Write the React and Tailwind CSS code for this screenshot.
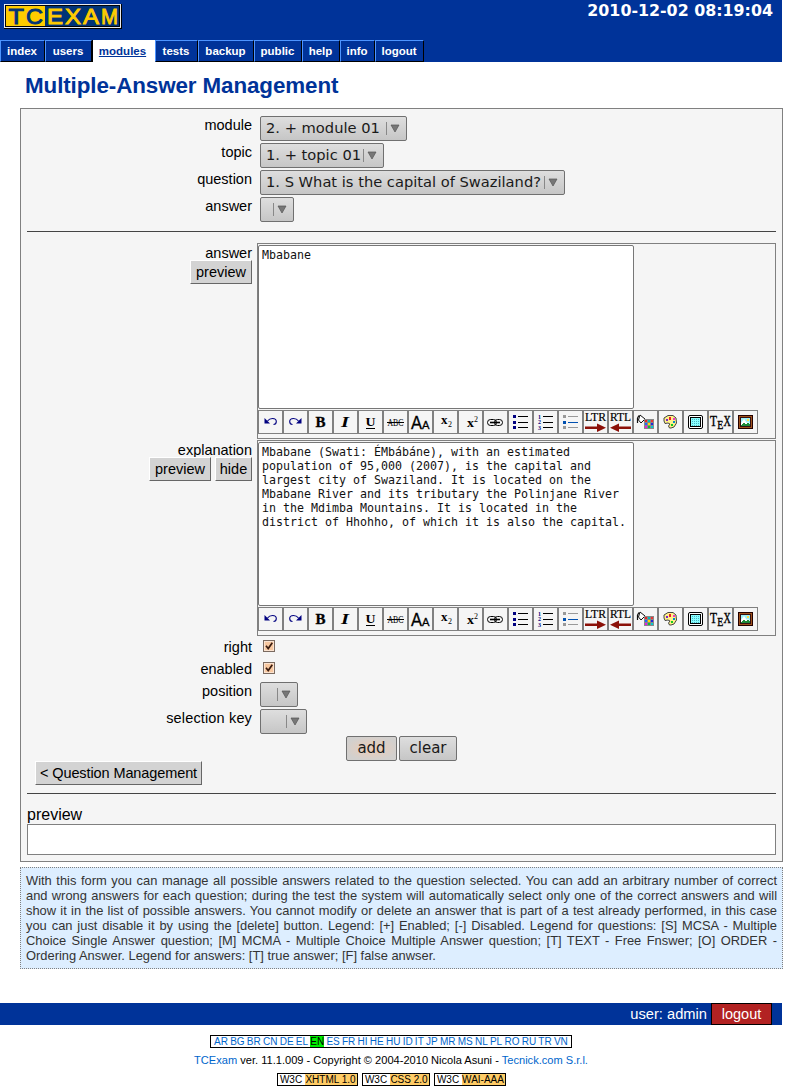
import React from "react";

const ARIAL = "font-['Liberation_Sans',Arial,sans-serif]";
const DEJAVU = "font-['DejaVu_Sans',sans-serif]";

const tabs = [
  ["index", "w-[45px]"],
  ["users", "w-[47px]"],
  ["modules", "w-[63px]"],
  ["tests", "w-[43px]"],
  ["backup", "w-[56px]"],
  ["public", "w-[48px]"],
  ["help", "w-[38px]"],
  ["info", "w-[35px]"],
  ["logout", "w-[49px]"],
];

const logoLetters = [
  ["T", 4.5, 15.5],
  ["C", 22, 17],
  ["E", 43, 16],
  ["X", 61, 16],
  ["A", 79, 16],
  ["M", 97, 17],
];

function Logo() {
  return (
    <svg width="118" height="25" viewBox="0 0 118 25" className="block" fontFamily="'Liberation Sans', sans-serif" fontSize="21.5" fontWeight="400" strokeWidth="0.9">
      <rect width="118" height="25" fill="#000" />
      <rect x="0.5" y="0.5" width="116" height="23" fill="#003377" stroke="#fff" />
      <rect x="1.5" y="1.5" width="114" height="21" fill="none" stroke="#000" />
      <rect x="2" y="2" width="39" height="20" fill="#ffcc00" />
      {logoLetters.map(([letter, x, w], i) => (
        <text key={letter} x={x} y="19.7" fill={i < 2 ? "#003377" : "#ffcc00"} stroke={i < 2 ? "#003377" : "#ffcc00"} textLength={w} lengthAdjust="spacingAndGlyphs">{letter}</text>
      ))}
    </svg>
  );
}

function Arrow() {
  return (
    <svg width="20" height="13" viewBox="0 0 20 13" className="block shrink-0" shapeRendering="crispEdges">
      <path d="M.5 0V13" stroke="#888" />
      <path d="M5 3H13L9 10Z" fill="#777" stroke="#555" strokeWidth=".7" shapeRendering="auto" />
    </svg>
  );
}

function Select({ text = "", width }) {
  return (
    <div className={`mt-px flex h-[25px] items-center justify-between rounded-[2px] border border-[#707070] bg-linear-to-b from-[#dedede] to-[#c6c6c6] pl-[5px] ${DEJAVU} text-[14.67px] text-[#1a1a1a] ${width}`}>
      <span className="pb-[2px] leading-[20px] whitespace-pre">{text}</span>
      <Arrow />
    </div>
  );
}

function Field({ label, children, height = "h-[27px]" }) {
  return (
    <div className={`flex ${height}`}>
      <div className="mr-2 w-[231px] text-right leading-[20px]">{label}</div>
      {children}
    </div>
  );
}

function LinkButton({ children, className = "" }) {
  return (
    <span className={`inline-block h-[24px] border border-t-white border-l-white border-r-[#666] border-b-[#666] bg-[#d3d3d3] text-center leading-[22px] whitespace-nowrap ${className}`}>
      {children}
    </span>
  );
}

const T = ({ x, y, size, w, children, ...rest }) => (
  <text x={x} y={y} fontSize={size} textLength={w} lengthAdjust="spacingAndGlyphs" fontFamily="'Liberation Serif', serif" {...rest}>{children}</text>
);

const listLines = (color) => (
  <path d="M9 5.5H19M9 11.5H19M9 16.5H19" stroke={color} />
);

const icons = [
  <g key="undo"><path d="M8.5 10C10 8 11.5 7.5 13.5 7.5C16 7.5 17.3 9 17.3 10.5C17.3 12.2 16 13.5 14.5 13.5" fill="none" stroke="#000080" strokeWidth="1.1" /><path d="M5.5 7V12.5H11Z" fill="#000080" /></g>,
  <g key="redo"><path d="M14.5 10C13 8 11.5 7.5 9.5 7.5C7 7.5 5.7 9 5.7 10.5C5.7 12.2 7 13.5 8.5 13.5" fill="none" stroke="#000080" strokeWidth="1.1" /><path d="M17.5 7V12.5H12Z" fill="#000080" /></g>,
  <T key="b" x="6.5" y="15.5" size="14" w="10" fontWeight="700" stroke="#000" strokeWidth=".3">B</T>,
  <T key="i" x="7" y="15.5" size="14" w="8" fontWeight="700" fontStyle="italic">I</T>,
  <g key="u"><T x="6.5" y="15" size="13.5" w="10" fontWeight="700">U</T><path d="M7 17.5H16" stroke="#000" /></g>,
  <g key="abc"><T x="3.5" y="15" size="10" w="16">ABC</T><path d="M3 11.5H20" stroke="#000" /></g>,
  <g key="size"><T x="2" y="18" size="19" w="11" fontFamily="'Liberation Sans'" stroke="#000" strokeWidth=".3">A</T><T x="13" y="18" size="11.5" w="7.5" fontFamily="'Liberation Sans'" stroke="#000" strokeWidth=".3">A</T></g>,
  <g key="sub"><T x="7" y="13" size="12" w="6.5" fontWeight="700">x</T><T x="14" y="16" size="9" w="4">2</T></g>,
  <g key="sup"><T x="8" y="16" size="13" w="7" fontWeight="700">x</T><T x="15" y="11" size="9" w="4">2</T></g>,
  <g key="link" fill="none" stroke="#000"><rect x="3.5" y="8.5" width="9" height="6" rx="3" /><rect x="10.5" y="8.5" width="8" height="6" rx="3" /><path d="M6 11.5H16" strokeWidth="1.6" /></g>,
  <g key="ul" shapeRendering="crispEdges">{listLines("#000")}<path d="M4 4h3v3H4zM4 10h3v3H4zM4 15h3v3H4z" fill="#000080" /></g>,
  <g key="ol" shapeRendering="crispEdges">{listLines("#000")}<g shapeRendering="auto" fill="#000080" fontWeight="700"><T x="4" y="7.5" size="6">1</T><T x="4" y="13.3" size="6">2</T><T x="4" y="19.1" size="6">3</T></g></g>,
  <g key="li" shapeRendering="crispEdges">{listLines("#999")}<path d="M4 4h3v3H4zM4 15h3v3H4z" fill="#999" /><path d="M4 10h3v3H4z" fill="#0050b0" /><path d="M9 11.5H19" stroke="#0050b0" /></g>,
  <g key="ltr"><T x="1" y="10" size="12.5" w="21" stroke="#000" strokeWidth=".2">LTR</T><path d="M1 15.5H13V12.5L22 16.8L13 21V18H1Z" fill="#8b1008" /></g>,
  <g key="rtl"><T x="1" y="10" size="12.5" w="21" stroke="#000" strokeWidth=".2">RTL</T><path d="M22 15.5H10V12.5L1 16.8L10 21V18H22Z" fill="#8b1008" /></g>,
  <g key="fill">
    <path d="M6 4L11 8L7 12L4.5 9Z" fill="#fff" stroke="#111" /><path d="M3.5 7L5 4.5M3.5 7V12" fill="none" stroke="#111" strokeWidth="1.2" />
    <rect x="10" y="8" width="10" height="10" fill="#888" />
    <path d="M11 9h2v2h-2z" fill="#e22" /><path d="M14 9h2v2h-2z" fill="#0bb" /><path d="M17 9h2v2h-2z" fill="#e33" /><path d="M11 12h2v2h-2z" fill="#26f" /><path d="M14 12h2v2h-2z" fill="#fd0" /><path d="M17 12h2v2h-2z" fill="#22d" /><path d="M11 15h2v2h-2z" fill="#d2d" /><path d="M14 15h2v2h-2z" fill="#1b3" /><path d="M17 15h2v2h-2z" fill="#0cc" />
  </g>,
  <g key="palette">
    <path d="M9 4.5H14L17 7L17.5 12L15 16L12 17H10.5L9.5 15L11 13L9 12L6 12.5L5 10V7Z" fill="#fff08a" stroke="#333" strokeWidth=".9" strokeLinejoin="round" />
    <path d="M10 6h2v3h-2z" fill="#e22" /><path d="M14 7h2v2h-2z" fill="#e3c" /><path d="M14 10h2v2h-2z" fill="#08c" /><path d="M12 13h2v2h-2z" fill="#1c2" /><path d="M7 8h2v2H7z" fill="#72c" />
  </g>,
  <g key="object">
    <rect x="4.5" y="4.5" width="14" height="13" rx="1.5" fill="#fff" stroke="#000" /><rect x="6.5" y="6.5" width="10" height="9" fill="#8ff" stroke="#000" />
    <path d="M8 8.5H16M8 10.5H16M8 12.5H16M8 14.5H16" stroke="#4ab4c4" strokeDasharray="1 1" />
  </g>,
  <g key="tex" stroke="#000" strokeWidth=".4"><T x="1" y="14.5" size="14" w="7">T</T><T x="8.2" y="18" size="13" w="6">E</T><T x="14.4" y="14.5" size="14" w="7.4">X</T></g>,
  <g key="image" shapeRendering="crispEdges">
    <rect x="4" y="4" width="15" height="14" fill="#200" /><rect x="5" y="5" width="13" height="12" fill="#a0521c" /><rect x="6" y="6" width="11" height="10" fill="#311" /><rect x="7" y="7" width="9" height="8" fill="#9cf0f8" />
    <path d="M7 12L10 8L13 12L14 11L16 13V14H7Z" fill="#fff" shapeRendering="auto" /><path d="M7 14L10 12L12 13L14 12L16 14V15H7Z" fill="#1d8a3a" /><path d="M13 8h2v2h-2z" fill="#fd4" />
  </g>,
];

function Toolbar() {
  return (
    <div className="mt-px flex">
      {icons.map((icon, i) => (
        <div key={i} className="h-[24px] w-[25px] border border-[#808080] bg-[#f5f5f5]">
          <svg width="23" height="22" viewBox="0 0 23 22" className="block overflow-visible">{icon}</svg>
        </div>
      ))}
    </div>
  );
}

function Editor({ label, buttons, lines }) {
  return (
    <div className="flex h-[197px]">
      <div className="mr-[5px] w-[231px] text-right">
        <div className="h-[17px] leading-[20px]">{label}</div>
        <div className="flex justify-end gap-1">{buttons}</div>
      </div>
      <div className="h-[196px] w-[519px] border border-[#808080]">
        <div className="mt-px h-[164px] w-[376px] rounded-[2px] border border-[#777] bg-white pt-[2px] pl-[3px] font-['DejaVu_Sans_Mono',monospace] text-[11.63px] leading-[14px] whitespace-pre text-[#111]">
          {lines.map((l) => <div key={l}>{l}</div>)}
        </div>
        <Toolbar />
      </div>
    </div>
  );
}

function Check() {
  return (
    <svg width="13" height="13" viewBox="0 0 13 13" className="mt-[3px] ml-[3px] block">
      <rect x=".5" y=".5" width="11" height="11" fill="#f8c8a0" stroke="#7a6a60" />
      <rect x="1.5" y="1.5" width="9" height="9" fill="none" stroke="#fbe3d0" />
      <path d="M3 5.8L5.2 8.5L9.3 2.7" fill="none" stroke="#3a1c10" strokeWidth="1.7" />
    </svg>
  );
}

const explanation = [
  "Mbabane (Swati: ÉMbábáne), with an estimated",
  "population of 95,000 (2007), is the capital and",
  "largest city of Swaziland. It is located on the",
  "Mbabane River and its tributary the Polinjane River",
  "in the Mdimba Mountains. It is located in the",
  "district of Hhohho, of which it is also the capital.",
];

const help = [
  "With this form you can manage all possible answers related to the question selected. You can add an arbitrary number of correct",
  "and wrong answers for each question; during the test the system will automatically select only one of the correct answers and will",
  "show it in the list of possible answers. You cannot modify or delete an answer that is part of a test already performed, in this case",
  "you can just disable it by using the [delete] button. Legend: [+] Enabled; [-] Disabled. Legend for questions: [S] MCSA - Multiple",
  "Choice Single Answer question; [M] MCMA - Multiple Choice Multiple Answer question; [T] TEXT - Free Fnswer; [O] ORDER -",
];

const languages = "AR BG BR CN DE EL EN ES FR HI HE HU ID IT JP MR MS NL PL RO RU TR VN".split(" ");

function Badge({ name, width }) {
  return (
    <span className={`flex h-[13px] border border-black text-[10px] leading-[11px] ${width}`}>
      <span className="w-[27px] text-center">W3C</span>
      <span className="flex-1 bg-[#ffcc66] text-center whitespace-nowrap">{name}</span>
    </span>
  );
}

export default function App() {
  return (
    <div className={`h-[1087px] w-[789px] overflow-hidden bg-white ${ARIAL} text-[14.5px] text-black`}>
      <header className="flex h-[62px] w-[782px] flex-col justify-between bg-[#003399]">
        <div className="flex justify-between pt-[4px] pr-[9px] pl-[4px]">
          <Logo />
          <div className={`-mt-[3px] ${DEJAVU} text-[15.85px] leading-[20px] font-bold text-white`}>2010-12-02 08:19:04</div>
        </div>
        <nav className="flex h-[22px] text-[11.5px] leading-[20px] font-bold">
          {tabs.map(([name, width]) =>
            name === "modules" ? (
              <a key={name} className={`border-l border-l-black bg-white pt-px pr-[3px] text-center text-[#003399] underline ${width}`}>{name}</a>
            ) : (
              <a key={name} className={`border border-t-[#4d94ff] border-r-black border-b-black border-l-[#4d94ff] pr-px text-center text-white ${width}`}>{name}</a>
            )
          )}
        </nav>
      </header>

      <h1 className="ml-[25px] h-[46px] pt-[10px] text-[22.4px] leading-[28px] font-bold tracking-[-0.1px] text-[#003399]">Multiple-Answer Management</h1>

      <main className="ml-[20px] h-[754px] w-[763px] border border-[#808080] bg-[#f5f5f5] pt-[6px]">
        <Field label="module"><Select text="2. + module 01" width="w-[147px]" /></Field>
        <Field label="topic"><Select text="1. + topic 01" width="w-[124px]" /></Field>
        <Field label="question"><Select text="1. S What is the capital of Swaziland?" width="w-[305px]" /></Field>
        <Field label="answer"><Select width="w-[34px]" /></Field>
        <div className="mx-[6px] mt-[8px] mb-[11px] h-px bg-[#444]" />

        <Editor label="answer" lines={["Mbabane"]} buttons={<LinkButton className="w-[62px]">preview</LinkButton>} />
        <Editor
          label="explanation"
          lines={explanation}
          buttons={<><LinkButton className="w-[62px]">preview</LinkButton><LinkButton className="w-[37px]">hide</LinkButton></>}
        />

        <Field label="right" height="h-[22px]"><Check /></Field>
        <Field label="enabled" height="h-[22px]"><Check /></Field>
        <Field label="position"><Select width="w-[38px]" /></Field>
        <Field label={<span className="tracking-[0.15px]">selection key</span>}><Select width="w-[47px]" /></Field>

        <div className={`flex h-[26px] gap-[2px] pt-px pl-[325px] ${DEJAVU} text-[15px] leading-[23px] text-[#1a1a1a]`}>
          <div className="h-[25px] w-[51px] rounded-[2px] border border-[#707070] bg-[radial-gradient(ellipse_at_center,#e6cdbd_20%,#d2d0ce_75%)] text-center">add</div>
          <div className="h-[25px] w-[58px] rounded-[2px] border border-[#707070] bg-linear-to-b from-[#dedede] to-[#c6c6c6] text-center">clear</div>
        </div>
        <div className="flex h-[24px] pl-[14px]"><LinkButton className="w-[167px] tracking-[-0.1px]">&lt; Question Management</LinkButton></div>
        <div className="mx-[6px] mt-[8px] h-px bg-[#444]" />
        <div className="mt-[10px] ml-[6px] h-[20px] text-[16px] leading-[22px]">preview</div>
        <div className="mx-[6px] h-[31px] border border-[#808080] bg-white" />
      </main>

      <section className="mt-[5px] ml-[20px] h-[102px] w-[763px] border border-dotted border-[#808080] bg-[#ddeeff] p-[5px] text-[12.9px] leading-[15px] text-[#333]">
        {help.map((l) => <div key={l} className="whitespace-nowrap [text-align-last:justify]">{l}</div>)}
        <div>Ordering Answer. Legend for answers: [T] true answer; [F] false anwser.</div>
      </section>

      <div className="mt-[34px] flex h-[22px] w-[782px] justify-end bg-[#003399] pr-[10px] leading-[22px] text-white">
        <span className="mr-[4px] text-[14.7px]">user: admin</span>
        <span className="w-[61px] border border-black bg-[#b22222] text-center leading-[20px]">logout</span>
      </div>

      <footer className="flex w-[782px] flex-col items-center pt-[10px] text-[11px]">
        <div className="flex h-[13px] w-[362px] justify-between border border-black px-[3px] text-[10px] leading-[11.5px] text-[#0066cc]">
          {languages.map((l) => <span key={l} className={l === "EN" ? "bg-[#00ee00] text-black" : ""}>{l}</span>)}
        </div>
        <div className="mt-[4px] h-[18px] text-[11.08px] leading-[17px]">
          <span className="text-[#0066cc]">TCExam</span> ver. 11.1.009 - Copyright © 2004-2010 Nicola Asuni - <span className="text-[#0066cc]">Tecnick.com S.r.l.</span>
        </div>
        <div className="mt-[3px] flex gap-[4px]">
          <Badge name="XHTML 1.0" width="w-[81px]" />
          <Badge name="CSS 2.0" width="w-[68px]" />
          <Badge name="WAI-AAA" width="w-[72px]" />
        </div>
      </footer>
    </div>
  );
}
